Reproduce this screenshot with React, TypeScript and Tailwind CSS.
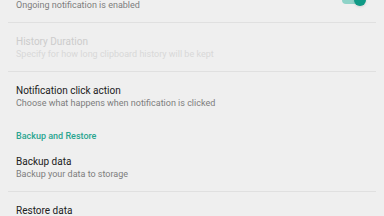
const font = { fontFamily: "Roboto, 'Noto Sans', sans-serif" };

function Divider() {
  return <div className="mx-2 h-px bg-[#e0e0e0]" />;
}

function Pref({
  title,
  summary,
  disabled = false,
}: {
  title: string;
  summary?: string;
  disabled?: boolean;
}) {
  return (
    <div className="flex flex-col pl-4 pr-4 pt-[12px] pb-[10px]">
      <div
        className={`text-[10px] leading-[13px] ${disabled ? "text-[#cccccc]" : "text-[#212121]"}`}
      >
        {title}
      </div>
      {summary && (
        <div
          className={`text-[9px] leading-[13px] ${disabled ? "text-[#d8d8d8]" : "text-[#7d7d7d]"}`}
        >
          {summary}
        </div>
      )}
    </div>
  );
}

export default function App() {
  return (
    <div className="w-[384px] h-[216px] overflow-hidden bg-[#efefef]" style={font}>
      <div className="flex items-start justify-between pl-4 pr-[18px] h-[22px]">
        <div className="text-[9px] leading-[13px] text-[#7d7d7d] mt-[-1px]">
          Ongoing notification is enabled
        </div>
        <div className="relative w-[26px] h-[12px] -mt-[6px]">
          <div className="absolute left-[2px] right-[2px] top-[2px] h-[8px] rounded-full bg-[#8fd3c8]" />
          <div className="absolute right-0 top-0 w-[12px] h-[12px] rounded-full bg-[#0f9a86] shadow-sm" />
        </div>
      </div>
      <Divider />
      <Pref
        title="History Duration"
        summary="Specify for how long clipboard history will be kept"
        disabled
      />
      <Divider />
      <Pref
        title="Notification click action"
        summary="Choose what happens when notification is clicked"
      />
      <div className="pl-4 pt-[10px] text-[9px] leading-[13px] font-medium text-[#2aa58f]">
        Backup and Restore
      </div>
      <Pref title="Backup data" summary="Backup your data to storage" />
      <Divider />
      <Pref title="Restore data" />
    </div>
  );
}
